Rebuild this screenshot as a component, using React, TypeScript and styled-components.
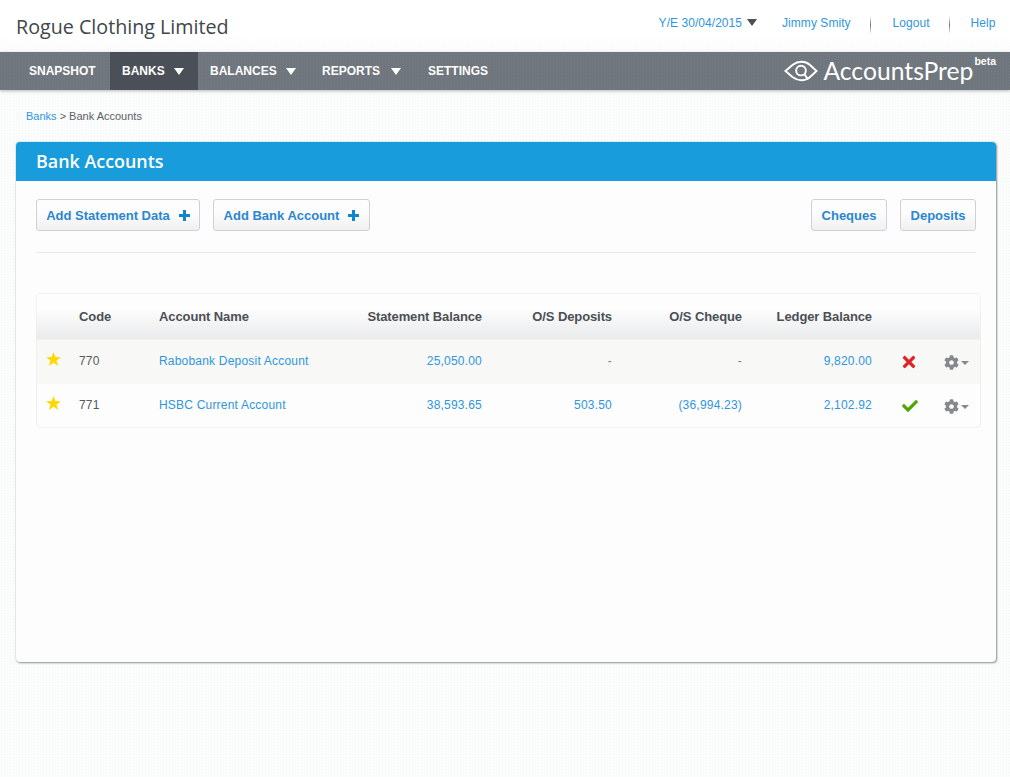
import React from 'react'
import styled, { createGlobalStyle } from 'styled-components'
import { FaCheck, FaCog, FaTimes } from 'react-icons/fa'

const GlobalStyle = createGlobalStyle`
  html, body {
    margin: 0;
    padding: 0;
    height: 100%;
  }
  body {
    min-height: 777px;
    font-family: "Liberation Sans", Arial, sans-serif;
    color: #555a60;
    background-color: #fbfcfc;
    background-image: radial-gradient(#f4f5f5 0.6px, transparent 0.7px);
    background-size: 3px 3px;
  }
`

const sans = `"Open Sans", "Noto Sans", sans-serif`
const blue = '#2f96dc'

const rows = [
  { code: '770', name: 'Rabobank Deposit Account', statement: '25,050.00', deposits: '-', cheque: '-', ledger: '9,820.00', ok: false },
  { code: '771', name: 'HSBC Current Account', statement: '38,593.65', deposits: '503.50', cheque: '(36,994.23)', ledger: '2,102.92', ok: true },
]

const TopBar = styled.header`
  height: 52px;
  box-sizing: border-box;
  display: flex;
  justify-content: space-between;
  background: linear-gradient(#ffffff 0, #ffffff 36px, rgba(255, 255, 255, 0) 52px);
`

const Company = styled.h1`
  margin: 13px 0 0 16px;
  font-family: ${sans};
  font-size: 19.7px;
  line-height: 27px;
  font-weight: 400;
  color: #40464c;
`

const TopLinks = styled.nav`
  display: flex;
  align-items: flex-start;
  padding-top: 15px;
  height: 18px;
  font-size: 12px;
  line-height: 16px;
  letter-spacing: 0.05px;
`

const TopLink = styled.a<{ $gap: number }>`
  color: ${blue};
  margin-right: ${p => p.$gap}px;
`

const TopCaret = styled.span`
  width: 0;
  height: 0;
  margin: 4px 25px 0 -16px;
  border-left: 5.5px solid transparent;
  border-right: 5.5px solid transparent;
  border-top: 7px solid #4b5056;
`

const Sep = styled.span<{ $gap: number }>`
  width: 1px;
  height: 18px;
  margin: 1px ${p => p.$gap}px 0 0;
  background: linear-gradient(rgba(110, 116, 122, 0), #6e747a 50%, rgba(110, 116, 122, 0));
`

const NavBar = styled.div`
  height: 38px;
  display: flex;
  align-items: stretch;
  background: #70767d;
  background-image: radial-gradient(#767c83 0.6px, transparent 0.7px);
  background-size: 3px 3px;
  box-shadow: 0 1px 3px rgba(80, 85, 90, 0.4);
  position: relative;
`

const NavItem = styled.a<{ $active?: boolean; $width: number; $pad?: number }>`
  width: ${p => p.$width}px;
  box-sizing: border-box;
  padding-left: ${p => p.$pad ?? 12}px;
  display: flex;
  align-items: center;
  font-size: 12px;
  font-weight: 700;
  color: #ffffff;
  background: ${p => (p.$active ? '#4b5058' : 'transparent')};
`

const NavCaret = styled.span<{ $gap: number }>`
  width: 0;
  height: 0;
  margin-left: ${p => p.$gap}px;
  border-left: 5.5px solid transparent;
  border-right: 5.5px solid transparent;
  border-top: 7px solid #ffffff;
`

const Logo = styled.div`
  margin-left: auto;
  margin-right: 14px;
  display: flex;
  align-items: center;
  color: #ffffff;
`

const LogoText = styled.span`
  font-family: Lato, ${sans};
  font-weight: 400;
  font-size: 24.7px;
  line-height: 38px;
  margin-left: 5px;
`

const Beta = styled.sup`
  font-size: 10.5px;
  line-height: 12px;
  font-weight: 700;
  align-self: flex-start;
  margin: 3px 0 0 1px;
  vertical-align: baseline;
`

const Crumbs = styled.div`
  padding: 19px 0 0 26px;
  height: 33px;
  font-size: 11px;
  line-height: 14px;
  color: #5c6166;
`

const CrumbLink = styled.a`
  color: ${blue};
`

const Card = styled.section`
  margin: 0 14px 0 16px;
  height: 520px;
  box-sizing: border-box;
  background: #fdfdfd;
  border-radius: 4px;
  box-shadow: 1px 1px 2px rgba(70, 75, 80, 0.55), 0 0 2px rgba(70, 75, 80, 0.35);
  overflow: hidden;
`

const CardTitle = styled.h2`
  margin: 0;
  height: 39px;
  padding-left: 20px;
  background: #199cdb;
  font-family: ${sans};
  font-size: 17.9px;
  line-height: 39px;
  font-weight: 600;
  color: #ffffff;
`

const Toolbar = styled.div`
  margin: 18px 20px 0;
  padding-bottom: 21px;
  display: flex;
  gap: 13px;
  border-bottom: 1px solid #e9eaeb;
`

const Button = styled.a<{ $push?: boolean; $width: number }>`
  width: ${p => p.$width}px;
  height: 32px;
  box-sizing: border-box;
  display: flex;
  align-items: center;
  justify-content: center;
  gap: 9px;
  margin-left: ${p => (p.$push ? 'auto' : '0')};
  border: 1px solid #ced2d6;
  border-radius: 3px;
  background: linear-gradient(#fdfdfd 40%, #f0f0f0);
  font-size: 13px;
  font-weight: 700;
  color: #2a87d0;
`

const Table = styled.div`
  margin: 40px 15px 0 20px;
  border: 1px solid #f0f0ee;
  border-radius: 4px;
  height: 135px;
  box-sizing: border-box;
`

const Row = styled.div<{ $shade?: boolean }>`
  display: grid;
  grid-template-columns: 42px 80px 193px 130px 130px 130px 130px 72px 1fr;
  align-items: center;
  height: 44px;
  box-sizing: border-box;
  padding-bottom: 2px;
  font-size: 12px;
  letter-spacing: 0.2px;
  background: ${p => (p.$shade ? '#f8f8f7' : 'transparent')};
`

const HeadRow = styled(Row)`
  height: 46px;
  padding-bottom: 1px;
  font-size: 13px;
  font-weight: 700;
  letter-spacing: -0.1px;
  color: #4b4f55;
  background: linear-gradient(#fdfdfd 35%, #ebeced 92%);
  border-bottom: 1px solid #f3f3e9;
`

const Cell = styled.div<{ $right?: boolean; $link?: boolean; $muted?: boolean }>`
  text-align: ${p => (p.$right ? 'right' : 'left')};
  color: ${p => (p.$link ? blue : p.$muted ? '#7c8288' : 'inherit')};
`

const StarCell = styled.div`
  padding-left: 9px;
  display: flex;
  margin-top: -4px;
`

const StatusCell = styled.div<{ $ok: boolean }>`
  display: flex;
  justify-content: flex-end;
  padding-right: 26px;
  margin-top: 2px;
  color: ${p => (p.$ok ? '#4ea600' : '#e32222')};
`

const GearCell = styled.div`
  display: flex;
  align-items: center;
  gap: 2px;
  margin-top: 3px;
  color: #85888c;
`

const GearCaret = styled.span`
  width: 0;
  height: 0;
  border-left: 4px solid transparent;
  border-right: 4px solid transparent;
  border-top: 4px solid #85888c;
`

const LogoEye = () => (
  <svg width="34" height="22" viewBox="0 0 35 22" fill="none" stroke="#fff" strokeWidth="2">
    <path d="M1.5 11 L9 4.5 C12 2.3 15 1.5 18 1.5 C21 1.5 24 2.3 26.5 4.5 L33.5 11 L26.5 17.5 C24 19.7 21 20.5 18 20.5 C15 20.5 12 19.7 9 17.5 Z" />
    <circle cx="17.5" cy="10.5" r="5" />
    <path d="M21 14 L24.5 19.5" />
  </svg>
)

const PlusIcon = () => (
  <svg width="11" height="11" viewBox="0 0 11 11" fill="#0f86cc">
    <path d="M4 0 H7 V4 H11 V7 H7 V11 H4 V7 H0 V4 H4 Z" />
  </svg>
)

const StarIcon = () => (
  <svg width="15" height="14" viewBox="0 0 16 15" fill="#ffd800">
    <path d="M8 0 L10 5.4 L16 5.6 L11.2 9.1 L13 15 L8 11.6 L3 15 L4.8 9.1 L0 5.6 L6 5.4 Z" />
  </svg>
)

export default function App() {
  return (
    <>
      <GlobalStyle />
      <TopBar>
        <Company>Rogue Clothing Limited</Company>
        <TopLinks>
          <TopLink $gap={21}>Y/E 30/04/2015</TopLink>
          <TopCaret />
          <TopLink $gap={19}>Jimmy Smity</TopLink>
          <Sep $gap={22} />
          <TopLink $gap={19}>Logout</TopLink>
          <Sep $gap={21} />
          <TopLink $gap={14.5}>Help</TopLink>
        </TopLinks>
      </TopBar>
      <NavBar>
        <NavItem $width={110} $pad={29}>SNAPSHOT</NavItem>
        <NavItem $width={88} $active>BANKS<NavCaret $gap={9} /></NavItem>
        <NavItem $width={112}>BALANCES<NavCaret $gap={9} /></NavItem>
        <NavItem $width={106}>REPORTS<NavCaret $gap={11} /></NavItem>
        <NavItem $width={90}>SETTINGS</NavItem>
        <Logo>
          <LogoEye />
          <LogoText>AccountsPrep</LogoText>
          <Beta>beta</Beta>
        </Logo>
      </NavBar>
      <Crumbs>
        <CrumbLink>Banks</CrumbLink> &gt; Bank Accounts
      </Crumbs>
      <Card>
        <CardTitle>Bank Accounts</CardTitle>
        <Toolbar>
          <Button $width={164}>Add Statement Data <PlusIcon /></Button>
          <Button $width={157}>Add Bank Account <PlusIcon /></Button>
          <Button $width={76} $push>Cheques</Button>
          <Button $width={76}>Deposits</Button>
        </Toolbar>
        <Table>
          <HeadRow>
            <div />
            <Cell>Code</Cell>
            <Cell>Account Name</Cell>
            <Cell $right>Statement Balance</Cell>
            <Cell $right>O/S Deposits</Cell>
            <Cell $right>O/S Cheque</Cell>
            <Cell $right>Ledger Balance</Cell>
          </HeadRow>
          {rows.map((r, i) => (
            <Row key={r.code} $shade={i === 0}>
              <StarCell><StarIcon /></StarCell>
              <Cell>{r.code}</Cell>
              <Cell $link>{r.name}</Cell>
              <Cell $right $link>{r.statement}</Cell>
              <Cell $right $link={r.deposits !== '-'} $muted>{r.deposits}</Cell>
              <Cell $right $link={r.cheque !== '-'} $muted>{r.cheque}</Cell>
              <Cell $right $link>{r.ledger}</Cell>
              <StatusCell $ok={r.ok}>{r.ok ? <FaCheck size={16} /> : <FaTimes size={18} />}</StatusCell>
              <GearCell><FaCog size={15} /><GearCaret /></GearCell>
            </Row>
          ))}
        </Table>
      </Card>
    </>
  )
}
